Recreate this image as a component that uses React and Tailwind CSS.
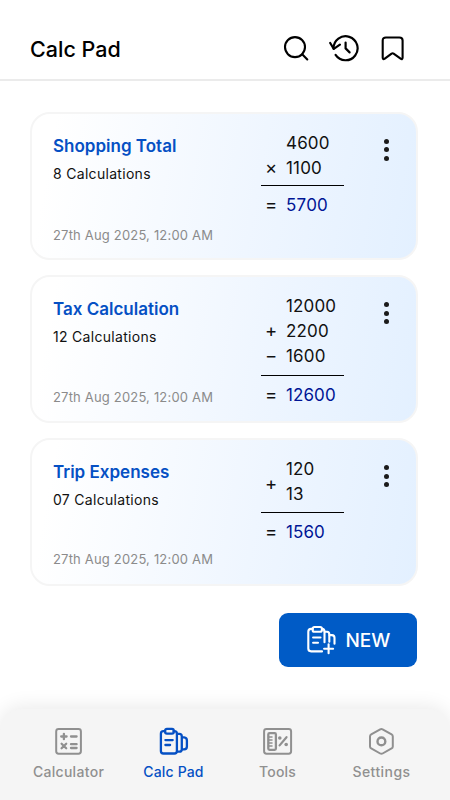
import React from "react";

const cards = [
  {
    title: "Shopping Total",
    count: "8 Calculations",
    dateClass: "mt-[41.5px]",
    lineClass: "mt-[4px]",
    rows: [["", "4600"], ["×", "1100"]],
    result: "5700",
  },
  {
    title: "Tax Calculation",
    count: "12 Calculations",
    dateClass: "mt-[40px]",
    lineClass: "mt-[6px]",
    rows: [["", "12000"], ["+", "2200"], ["−", "1600"]],
    result: "12600",
  },
  {
    title: "Trip Expenses",
    count: "07 Calculations",
    dateClass: "mt-[39px]",
    lineClass: "mt-[5px]",
    rows: [["", "120"], ["", "13"]],
    spanOperator: "+",
    result: "1560",
  },
];

const stroke = {
  fill: "none",
  stroke: "currentColor",
  strokeLinecap: "round",
  strokeLinejoin: "round",
};

function SearchIcon() {
  return (
    <svg width="26" height="26" viewBox="0 0 26 26" {...stroke} strokeWidth="2.1">
      <circle cx="12" cy="12.1" r="10" />
      <path d="M19.2 19.3 24.3 24.4" />
    </svg>
  );
}

function HistoryIcon() {
  return (
    <svg width="32" height="28" viewBox="0 0 32 28" {...stroke} strokeWidth="2.2">
      <path d="M4.6 14.6A12 12 0 1 1 6.6 20.9" />
      <path d="M1.2 9 4.8 14.8 10.9 10.6" />
      <path d="M16.6 8.5V14.4L20.6 18.4" />
    </svg>
  );
}

function BookmarkIcon() {
  return (
    <svg width="24" height="26" viewBox="0 0 24 26" {...stroke} strokeWidth="2.1">
      <path d="M5.9 2.5H19.4Q22.6 2.5 22.6 5.5V22.6Q22.6 25.1 20.6 23.6L13.6 18.6Q12.6 17.9 11.6 18.6L4.8 23.6Q2.7 25.1 2.7 22.6V5.5Q2.7 2.5 5.9 2.5Z" />
    </svg>
  );
}

function NewPadIcon() {
  return (
    <svg width="30" height="30" viewBox="0 0 30 30" {...stroke} strokeWidth="2.1">
      <path d="M6.8 3.9H5.1Q2.3 3.9 2.3 6.7V23.6Q2.3 26.4 5.1 26.4H16" />
      <rect x="6.6" y="2" width="9.3" height="4.8" rx="1.8" />
      <path d="M16 3.9Q18.5 4.1 18.5 6.7V17.2" />
      <path d="M18.7 6.7H21.1Q23.3 6.7 23.3 9.3V16.8" />
      <path d="M23.5 10.1H25.9Q28.5 10.3 28.5 12.8V18.7" />
      <path d="M7.1 12.5H14.5M7.1 17.7H12M22.6 19.3V28.3M18.1 23.8H27.1" />
    </svg>
  );
}

function CalculatorIcon() {
  return (
    <svg width="28" height="28" viewBox="0 0 28 28" {...stroke} strokeWidth="2">
      <rect x="1.2" y="2" width="24.7" height="24.7" rx="2.4" />
      <path
        d="M6.2 9.5H11.6M8.9 6.8V12.2M16 9.5H21.6M6.6 16.7 11.2 21.2M11.2 16.7 6.6 21.2M16 17.2H21.6M16 21H21.6"
        strokeWidth="2.3"
      />
    </svg>
  );
}

function PadIcon() {
  return (
    <svg width="30" height="28" viewBox="0 0 30 28" {...stroke} strokeWidth="2.3">
      <g transform="translate(-0.9 0)">
        <path d="M7 4.2H5.3Q2.8 4.2 2.8 6.7V24Q2.8 26.5 5.3 26.5H16.3Q18.8 26.5 18.8 24V6.7Q18.8 4.2 16.3 4.2H15.5" />
        <rect x="7" y="1.9" width="8.7" height="4.7" rx="1.8" />
        <path d="M19 6.9H21.2Q23.7 6.9 23.7 9.4V22.2Q23.7 24.7 21.2 24.7H19" />
        <path d="M24 10.4H26Q28.8 10.7 28.8 13.4V19.4Q28.8 22.1 26 22.4H24" />
        <path d="M7.3 13.1H14.6M7.3 18H12" />
      </g>
    </svg>
  );
}

function ToolsIcon() {
  return (
    <svg width="30" height="28" viewBox="0 0 30 28" {...stroke} strokeWidth="2">
      <g transform="translate(-0.4 0)">
        <rect x="1.5" y="2" width="27" height="24.7" rx="2.4" />
        <rect x="5.7" y="6.2" width="7.6" height="16.6" rx="1.2" strokeWidth="2.3" />
        <path d="M6 10H9.4M6 13H9.4M6 16H9.4M6 19H9.4" strokeWidth="1.5" />
        <path d="M17 18.4 23.9 10.2" strokeWidth="2.2" />
        <circle cx="17.2" cy="11" r="1.8" fill="currentColor" stroke="none" />
        <circle cx="23.6" cy="17.5" r="1.8" fill="currentColor" stroke="none" />
      </g>
    </svg>
  );
}

function SettingsIcon() {
  return (
    <svg width="26" height="28" viewBox="0 0 26 28" {...stroke} strokeWidth="2">
      <g transform="translate(-0.4 0)">
        <path d="M11.6 2.3Q12.8 1.6 14 2.3L23 7.4Q24.2 8.1 24.2 9.4V19.4Q24.2 20.7 23 21.4L14 26.5Q12.8 27.2 11.6 26.5L2.6 21.4Q1.4 20.7 1.4 19.4V9.4Q1.4 8.1 2.6 7.4L11.6 2.3Z" />
        <circle cx="12.8" cy="14.4" r="3.9" strokeWidth="2.4" />
      </g>
    </svg>
  );
}

function Operator({ children }) {
  return (
    <span className="-mt-[1.5px] w-[25px] shrink-0 pl-[4px] text-[18.5px] text-[#111111]">{children}</span>
  );
}

function Sum({ card }) {
  return (
    <div className="w-[83px] pt-[17.5px] text-[17px] leading-[25px] text-[#111111]">
      <div className="flex">
        {card.spanOperator && (
          <div className="flex items-center pt-[3px]">
            <Operator>{card.spanOperator}</Operator>
          </div>
        )}
        <div className="flex-1">
          {card.rows.map(([op, value]) => (
            <div key={value} className="flex h-[25px]">
              {!card.spanOperator && <Operator>{op}</Operator>}
              <span className="tracking-[0.15px] [font-kerning:none]">{value}</span>
            </div>
          ))}
        </div>
      </div>
      <div className={`${card.lineClass} h-px bg-black`} />
      <div className="mt-[7px] flex h-[25px]">
        <Operator>=</Operator>
        <span className="tracking-[0.1px] text-[#001595] [font-kerning:none]">{card.result}</span>
      </div>
    </div>
  );
}

function Card({ card }) {
  return (
    <article className="flex h-[148.5px] rounded-[20px] border-2 border-[#f5f5f5] bg-[linear-gradient(100deg,#ffffff_6%,#eff6ff_58%,#e3f0ff_100%)] pl-[21px]">
      <div className="w-[208px] shrink-0 pt-[20px]">
        <h2 className="text-[17px] leading-6 font-semibold text-[#0550c4]">{card.title}</h2>
        <p className="mt-[6px] text-[14px] leading-5 tracking-[0.3px] text-[#111111]">{card.count}</p>
        <p className={`${card.dateClass} text-[13px] leading-5 tracking-[0.18px] text-[#8b8b8b]`}>27th Aug 2025, 12:00 AM</p>
      </div>
      <Sum card={card} />
      <button aria-label="More" className="mt-[25.5px] ml-[39.3px] flex h-[24px] w-[6px] flex-col items-center gap-[3.6px] text-[#1b1b1b]">
        <span className="h-[4.9px] w-[4.9px] shrink-0 rounded-full bg-current" />
        <span className="h-[4.9px] w-[4.9px] shrink-0 rounded-full bg-current" />
        <span className="h-[4.9px] w-[4.9px] shrink-0 rounded-full bg-current" />
      </button>
    </article>
  );
}

function Tab({ icon, label, className }) {
  return (
    <div className={`flex flex-col items-center ${className}`}>
      {icon}
      <span className="mt-[7px] text-[14px] leading-5 font-medium">{label}</span>
    </div>
  );
}

export default function App() {
  return (
    <div className="flex h-[800px] w-[450px] flex-col overflow-hidden bg-white font-['Inter',sans-serif]">
      <header className="flex h-[81px] shrink-0 items-center border-b-2 border-[#ebebeb] pt-[19px] pb-[2px] pl-[30px]">
        <h1 className="w-[253px] pt-[2px] text-[21.5px] leading-7 font-medium text-black">Calc Pad</h1>
        <div className="flex items-center text-black">
          <SearchIcon />
          <div className="ml-[20px]"><HistoryIcon /></div>
          <div className="ml-[19px]"><BookmarkIcon /></div>
        </div>
      </header>
      <main className="flex flex-1 flex-col pt-[30.5px] pr-[32px] pl-[30px]">
        <div className="flex flex-col gap-[14.7px]">
          {cards.map((card) => (
            <Card key={card.title} card={card} />
          ))}
        </div>
        <button className="mt-[26.5px] mr-[1.5px] flex h-[54px] w-[138px] items-center self-end rounded-[9px] bg-[#005bc6] pl-[27.5px] text-white">
          <NewPadIcon />
          <span className="ml-[9.5px] pt-[2px] text-[19px] font-medium">NEW</span>
        </button>
      </main>
      <nav className="flex h-[91px] shrink-0 rounded-t-[22px] bg-[#f5f5f5] pt-[18px] shadow-[0_-2px_20px_rgba(0,0,0,0.09)]">
        <Tab icon={<CalculatorIcon />} label="Calculator" className="ml-[18px] w-[101px] tracking-[0.3px] text-[#909090]" />
        <Tab icon={<PadIcon />} label="Calc Pad" className="ml-[4px] w-[101px] tracking-[0.15px] text-[#0550c4]" />
        <Tab icon={<ToolsIcon />} label="Tools" className="ml-[3px] w-[101px] tracking-[0.2px] text-[#909090]" />
        <Tab icon={<SettingsIcon />} label="Settings" className="ml-[3px] w-[101px] tracking-[0.45px] text-[#909090]" />
      </nav>
    </div>
  );
}
